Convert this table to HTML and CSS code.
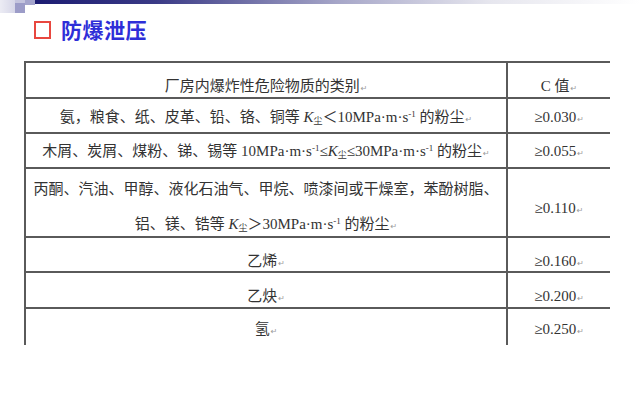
FILE: index.html
```html
<!DOCTYPE html>
<html lang="zh">
<head>
<meta charset="utf-8">
<link rel="stylesheet" href="styles.css">
</head>
<body>
<div class="deco">
  <div class="sq sq1"></div>
  <div class="sq2col"><div class="sq2a"></div><div class="sq2b"></div></div>
  <div class="sq sq3"></div>
  <div class="bar"></div>
</div>
<h1 class="title"><span class="box"></span><span class="title-text">防爆泄压</span></h1>
<div class="grid">
  <div class="cell l h0">厂房内爆炸性危险物质的类别<span class="pm">↵</span></div>
  <div class="cell r h0">C 值<span class="pm">↵</span></div>

  <div class="cell l h1">氨，粮食、纸、皮革、铅、铬、铜等 <i>K</i><span class="sub">尘</span>＜10MPa·m·s<sup>-1</sup> 的粉尘<span class="pm">↵</span></div>
  <div class="cell r h1">≥0.030<span class="pm">↵</span></div>

  <div class="cell l h2">木屑、炭屑、煤粉、锑、锡等 10MPa·m·s<sup>-1</sup>≤<i>K</i><span class="sub">尘</span>≤30MPa·m·s<sup>-1</sup> 的粉尘<span class="pm">↵</span></div>
  <div class="cell r h2">≥0.055<span class="pm">↵</span></div>

  <div class="cell l h3">丙酮、汽油、甲醇、液化石油气、甲烷、喷漆间或干燥室，苯酚树脂、<br>铝、镁、锆等 <i>K</i><span class="sub">尘</span>＞30MPa·m·s<sup>-1</sup> 的粉尘<span class="pm">↵</span></div>
  <div class="cell r h3r">≥0.110<span class="pm">↵</span></div>

  <div class="cell l h4">乙烯<span class="pm">↵</span></div>
  <div class="cell r h4">≥0.160<span class="pm">↵</span></div>

  <div class="cell l h5">乙炔<span class="pm">↵</span></div>
  <div class="cell r h5">≥0.200<span class="pm">↵</span></div>

  <div class="cell l h6 last">氢<span class="pm">↵</span></div>
  <div class="cell r h6 last">≥0.250<span class="pm">↵</span></div>
</div>
</body>
</html>
```

FILE: styles.css
```css
html, body {
  margin: 0;
  padding: 0;
  background: #ffffff;
}
body {
  width: 640px;
  height: 397px;
  overflow: hidden;
  font-family: "Liberation Serif", "Noto Sans CJK SC", serif;
  color: #333333;
}
.deco {
  display: flex;
  align-items: flex-start;
  height: 13px;
}
.sq1 {
  width: 15px;
  height: 13px;
  background: linear-gradient(90deg, #ececf4, #d6d6e8);
}
.sq2col {
  width: 10px;
  display: flex;
  flex-direction: column;
}
.sq2a {
  height: 3px;
  background: #c4c4de;
}
.sq2b {
  height: 10px;
  background: #9c9cc8;
}
.sq3 {
  width: 10px;
  height: 5px;
  background: #a4a4cc;
}
.bar {
  flex: 1;
  height: 4px;
  background: linear-gradient(90deg, #1c1c72 0%, #3a3a86 20%, #a6a6c8 50%, #e6e6ee 75%, #ffffff 100%);
}
.title {
  margin: 3px 0 0 34px;
  height: 27px;
  display: flex;
  align-items: center;
  gap: 10px;
  font-weight: normal;
}
.box {
  width: 13px;
  height: 14px;
  border: 2px solid #e8473f;
}
.title-text {
  font-family: "Noto Sans CJK SC", sans-serif;
  font-weight: 700;
  font-size: 21px;
  line-height: 27px;
  color: #2e2ed8;
  letter-spacing: 0.5px;
}
.grid {
  margin: 18px 0 0 24px;
  width: 584px;
  display: grid;
  grid-template-columns: 482px 102px;
  grid-template-rows: 36px 35px 35px 69px 35px 36px 36px;
  border-top: 2px solid #5a5a5a;
  border-left: 2px solid #5a5a5a;
}
.cell {
  box-sizing: border-box;
  border-bottom: 2px solid #5a5a5a;
  text-align: center;
  font-size: 15px;
  line-height: 20px;
  white-space: nowrap;
}
.cell.last {
  border-bottom: none;
}
.l {
  border-right: 2px solid #5a5a5a;
}
.h0 { padding-top: 13px; }
.h1 { padding-top: 8px; }
.h2 { padding-top: 7px; }
.h3 { padding-top: 3px; line-height: 35px; }
.h3r { padding-top: 29px; }
.h4 { padding-top: 13px; }
.h5 { padding-top: 13px; }
.h6 { padding-top: 10px; }
.pm {
  font-family: "DejaVu Sans", sans-serif;
  font-size: 8px;
  color: #9a9a9a;
  margin-left: 1px;
}
.sub {
  font-family: "Noto Sans CJK SC", sans-serif;
  font-size: 9px;
  vertical-align: -2px;
  line-height: 0;
}
sup {
  font-size: 9px;
  line-height: 0;
  vertical-align: 5px;
}
i {
  font-style: italic;
}
```
